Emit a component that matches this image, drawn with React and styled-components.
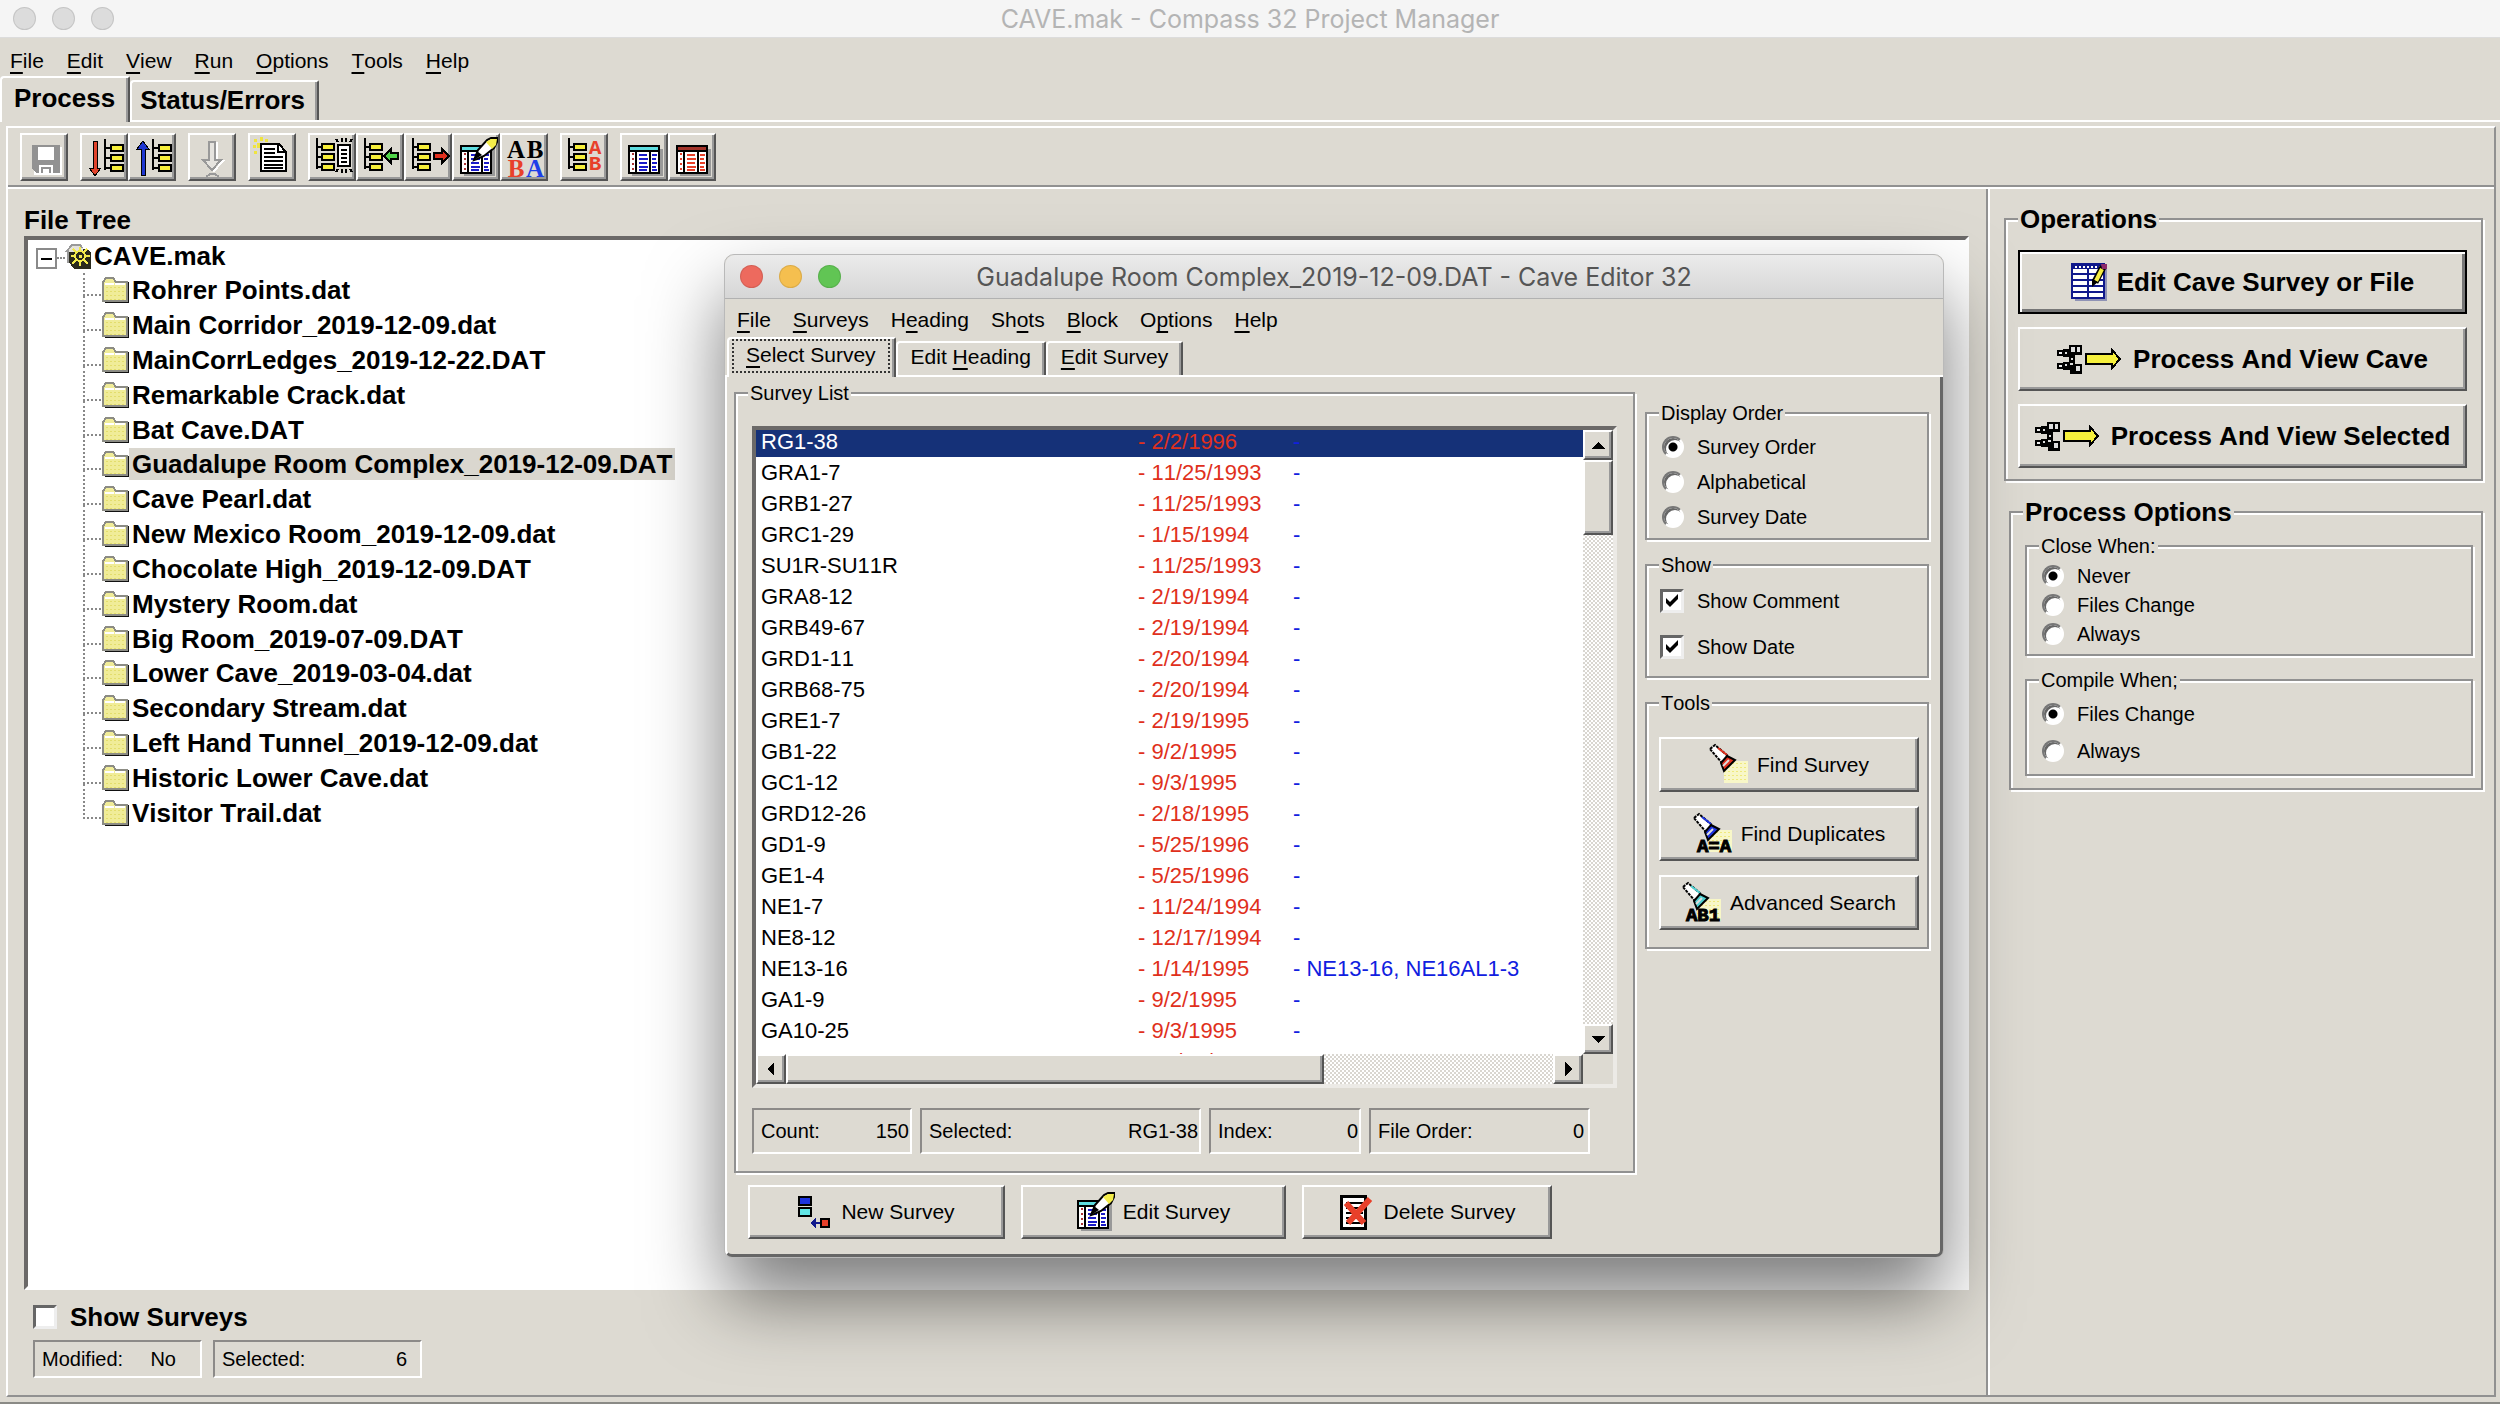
import React from "react";
import styled, { createGlobalStyle, css } from "styled-components";

const face = "#dddad2";
const shade = "#919191";
const dark = "#555";
const sans = '"Liberation Sans", Arial, sans-serif';

const GlobalStyle = createGlobalStyle`
  *, *::before, *::after { box-sizing: border-box; }
  body { margin: 0; background: ${face}; font-family: ${sans}; font-size: 20px; line-height: 24px; font-kerning: none; color: #000; }
  button, input { font: inherit; font-kerning: inherit; color: inherit; margin: 0; }
  ul { list-style: none; margin: 0; padding: 0; }
`;

const raised = css`
  border: 2px solid;
  border-color: #fff ${dark} ${dark} #fff;
  box-shadow: inset -2px -2px 0 #999;
  background: ${face};
`;

const sunken = css`
  border: 2px solid;
  border-color: #8c8a88 #fff #fff #8c8a88;
`;

/* ---------- application shell ---------- */

const Screen = styled.div`
  position: relative;
  min-height: 100vh;
  display: flex;
  flex-direction: column;
  border-bottom: 2px solid #8a8a86;
`;

const TitleBar = styled.header`
  display: flex;
  align-items: center;
  position: relative;
  height: ${(p) => (p.$active ? 44 : 38)}px;
  padding-left: ${(p) => (p.$active ? 15 : 13)}px;
  background: ${(p) => (p.$active ? "linear-gradient(#ebebeb, #d6d6d6)" : "#f5f5f5")};
  border-bottom: 1px solid ${(p) => (p.$active ? "#b1b1b1" : "#dcdcdc")};
  border-radius: ${(p) => (p.$active ? "10px 10px 0 0" : "0")};
`;

const Title = styled.h1`
  position: absolute;
  inset: 0;
  display: flex;
  align-items: center;
  justify-content: center;
  margin: 0;
  font: 400 25px/30px Inter, ${sans};
  color: ${(p) => (p.$active ? "#555" : "#b4b4b4")};
  pointer-events: none;
`;

const Lights = styled.div`
  display: flex;
  gap: 16px;
`;

const Light = styled.button`
  width: 23px;
  height: 23px;
  padding: 0;
  border: 1px solid rgba(0, 0, 0, 0.1);
  border-radius: 50%;
  background: ${(p) => p.$color};
`;

const MenuBar = styled.nav`
  display: flex;
  align-items: center;
  gap: ${(p) => (p.$small ? 22 : 23)}px;
  height: 38px;
  padding: ${(p) => (p.$small ? "4px 12px 0 12px" : "8px 10px 0")};
  font-size: 21px;
`;

const MenuItem = styled.button`
  padding: 0;
  border: 0;
  background: none;
  line-height: 28px;
`;

const Key = styled.span`
  text-decoration: underline;
  text-decoration-thickness: 2px;
  text-underline-offset: 4px;
`;

const TabBar = styled.div`
  display: flex;
  align-items: flex-end;
  height: ${(p) => p.$height}px;
  border-bottom: 2px solid #fff;
  padding-left: ${(p) => p.$start}px;
`;

const Tab = styled.button`
  display: flex;
  align-items: center;
  justify-content: center;
  align-self: ${(p) => (p.$active ? "stretch" : "flex-end")};
  height: ${(p) => (p.$active ? "auto" : p.$big ? "40px" : "34px")};
  margin-bottom: ${(p) => (p.$active ? -2 : 0)}px;
  padding: ${(p) => (p.$big ? (p.$active ? "0 13px 5px 12px" : "0 12px 3px 8px") : p.$active ? "0 4px 2px 3px" : "0 13px 5px")};
  font-size: ${(p) => (p.$big ? 26 : 21)}px;
  font-weight: ${(p) => (p.$big ? 700 : 400)};
  line-height: 28px;
  background: ${face};
  border: solid;
  border-width: 2px 2px 0 2px;
  border-color: #fff ${dark} #fff #fff;
  border-radius: 4px 2px 0 0;
  box-shadow: inset -2px 0 0 #999;
`;

const FocusBox = styled.span`
  padding: 0 12px 2px;
  margin-bottom: 2px;
  border: 2px dotted #333;
`;

const Body = styled.main`
  flex: 1;
  display: flex;
  flex-direction: column;
  margin: 4px 4px 5px 6px;
  border: 2px solid;
  border-color: #fff ${shade} ${shade} #fff;
`;

const Toolbar = styled.div`
  display: flex;
  gap: 12px;
  padding: 5px 12px 4px;
  border-bottom: 2px solid ${shade};
  box-shadow: 0 2px 0 #fff;
`;

const ToolGroup = styled.div`
  display: flex;
`;

const ToolButton = styled.button`
  ${raised}
  width: 48px;
  height: 48px;
  padding: 0;
  svg { display: block; margin: -2px; }
`;

const Panes = styled.div`
  flex: 1;
  display: flex;
  padding-top: 2px;
`;

const TreePane = styled.section`
  flex: 1;
  min-width: 0;
  display: flex;
  flex-direction: column;
  padding: 16px 17px 17px 16px;
`;

const PaneTitle = styled.h2`
  margin: 0 0 1px;
  font-size: 26px;
  line-height: 30px;
`;

const Tree = styled.div`
  flex: 1;
  margin-bottom: 4px;
  background: #fff;
  border: 4px solid;
  border-color: #6b6968 #fff #fff #6b6968;
  font-size: 26px;
  font-weight: 700;
  line-height: 30px;
  white-space: nowrap;
`;

const TreeRoot = styled.div`
  display: flex;
  align-items: center;
  height: 33px;
  padding: 0 0 2px 8px;
`;

const Collapse = styled.button`
  position: relative;
  width: 21px;
  height: 21px;
  margin: 6px 8px 0 0;
  padding: 0;
  background: #fff;
  border: 2px solid #8a8a8a;
  &::before {
    content: "";
    display: block;
    height: 2px;
    margin: 0 3px;
    background: #000;
  }
  &::after {
    content: "";
    position: absolute;
    left: 19px;
    top: 7px;
    width: 8px;
    border-top: 2px dotted #888;
  }
`;

const TreeName = styled.span`
  padding: 1px 3px;
  background: ${(p) => (p.$selected ? "#dad7cf" : "none")};
`;

const TreeList = styled.ul`
  display: grid;
  grid-auto-rows: 1fr;
  height: 557px;
  margin-left: 55px;
`;

const TreeItem = styled.li`
  position: relative;
  display: flex;
  align-items: center;
  padding-left: 19px;
  &::before {
    content: "";
    position: absolute;
    left: 0;
    top: calc(-50% + 6px);
    width: 18px;
    height: 100%;
    border: dotted #888;
    border-width: 0 0 2px 2px;
  }
  &:first-child::before {
    top: 0;
    height: calc(50% + 6px);
  }
`;

const CheckLabel = styled.label`
  display: flex;
  align-items: center;
  gap: 13px;
  height: ${(p) => p.$row}px;
  padding-left: ${(p) => p.$indent || 0}px;
  ${(p) => p.$bold && "font-size: 26px; font-weight: 700; line-height: 30px;"}
`;

const CheckBox = styled.input`
  appearance: none;
  width: 24px;
  height: 24px;
  background: #fff;
  border: 3px solid;
  border-color: #666 #eee #eee #666;
  &:checked {
    background: #fff url("data:image/svg+xml,%3Csvg xmlns='http://www.w3.org/2000/svg' viewBox='0 0 18 18'%3E%3Cpath d='M3 6v5l4 4 8-8V2L7 10z'/%3E%3C/svg%3E") center / 18px no-repeat;
  }
`;

const RadioDot = styled.input`
  appearance: none;
  width: 22px;
  height: 22px;
  border: 2px solid;
  border-color: #777 #fff #fff #777;
  border-radius: 50%;
  background: #fff;
  box-shadow: inset 2px 2px 0 #666;
  &:checked { background: radial-gradient(circle, #000 4px, #fff 5px); }
`;

const StatusRow = styled.div`
  display: flex;
  gap: ${(p) => p.$gap}px;
  margin-left: ${(p) => p.$indent || 0}px;
`;

const StatusField = styled.div`
  ${sunken}
  display: flex;
  align-items: center;
  justify-content: space-between;
  width: ${(p) => p.$width}px;
  height: ${(p) => (p.$tall ? 46 : 38)}px;
  padding: 0 ${(p) => p.$end || 1}px 0 7px;
`;

/* ---------- groups and buttons ---------- */

const Group = styled.fieldset`
  min-width: 0;
  margin: 0;
  padding: ${(p) => p.$pad};
  border: 2px solid ${shade};
  box-shadow: inset 2px 2px 0 #fff, 2px 2px 0 #fff;
`;

const Legend = styled.legend`
  padding: 0 2px;
  background: ${face};
  ${(p) => p.$bold && "font-size: 26px; font-weight: 700;"}
  line-height: ${(p) => (p.$bold ? 30 : 24)}px;
`;

const Stack = styled.div`
  display: flex;
  flex-direction: column;
  gap: ${(p) => p.$gap}px;
  padding: ${(p) => p.$pad || 0};
`;

const SidePane = styled.aside`
  width: 508px;
  padding: 15px 11px 0 16px;
  border-left: 2px solid ${shade};
  box-shadow: inset 2px 0 0 #fff;
`;

const PushButton = styled.button`
  ${raised}
  display: flex;
  align-items: center;
  justify-content: center;
  gap: ${(p) => p.$gap || 8}px;
  width: ${(p) => p.$width || "100%"};
  height: ${(p) => p.$height}px;
  padding: 0;
  white-space: nowrap;
  font-size: ${(p) => (p.$bold ? 26 : 21)}px;
  font-weight: ${(p) => (p.$bold ? 700 : 400)};
  ${(p) => p.$default && "border-color: #000; box-shadow: inset 2px 2px 0 #fff, inset -3px -3px 0 #777;"}
  svg { flex: none; }
`;

/* ---------- editor window ---------- */

const EditorWindow = styled.section`
  position: absolute;
  left: 28.96%;
  top: 254px;
  width: 48.8%;
  background: ${face};
  border: 1px solid #b9b9b9;
  border-radius: 10px 10px 8px 8px;
  box-shadow: 0 40px 76px 0 rgba(0, 0, 0, 0.52);
`;

const EditorPage = styled.div`
  display: flex;
  gap: 10px;
  padding: 4px 11px 15px 7px;
  border: solid;
  border-width: 0 3px 3px 2px;
  border-color: #fff #666 #666 #fff;
  border-radius: 0 0 7px 7px;
`;

const ListColumn = styled.div`
  flex: 1;
  min-width: 0;
`;

const OptionColumn = styled.div`
  width: 284px;
  display: flex;
  flex-direction: column;
  gap: 13px;
  padding-top: 20px;
`;

const ListBox = styled.div`
  display: grid;
  grid-template: 1fr 30px / 1fr 30px;
  height: 662px;
  background: #fff;
  border: 4px solid;
  border-color: #6b6968 #eceae6 #eceae6 #6b6968;
`;

const Rows = styled.div`
  min-height: 0;
  overflow: hidden;
`;

const SurveyTable = styled.table`
  width: 100%;
  margin-top: -4px;
  table-layout: fixed;
  border-collapse: collapse;
  font-size: 22px;
  line-height: 31px;
`;

const SurveyRow = styled.tr`
  color: ${(p) => (p.$selected ? "#fff" : "#000")};
  background: ${(p) => (p.$selected ? "#153178" : "none")};
`;

const Cell = styled.td`
  width: ${(p) => p.$width || "auto"};
  height: 31px;
  padding: 0 0 0 ${(p) => (p.$first ? 5 : 0)}px;
  color: ${(p) => p.$color || "inherit"};
  white-space: nowrap;
`;

const Scroll = styled.div`
  display: flex;
  flex-direction: ${(p) => (p.$vertical ? "column" : "row")};
  background: repeating-conic-gradient(#fff 0 25%, #d9d6d0 0 50%) 0 0 / 4px 4px;
`;

const Arrow = styled.button`
  ${raised}
  flex: none;
  width: 30px;
  height: 30px;
  padding: 0;
  display: grid;
  place-items: center;
`;

const Thumb = styled.div`
  ${raised}
  ${(p) => (p.$vertical ? "height: 75px; margin-bottom: auto;" : "width: 65%; margin-right: auto;")}
`;

const Corner = styled.div`
  background: ${face};
`;

const ButtonRow = styled.div`
  display: flex;
  gap: 16px;
  padding: 12px 0 0 14px;
`;

/* ---------- drawings ---------- */

const Drawing = styled.svg`
  overflow: visible;
`;

const Glyph = ({ w = 48, h = 48, children }) => (
  <Drawing width={w} height={h} viewBox={`0 0 ${w} ${h}`} aria-hidden="true" shapeRendering="crispEdges">
    {children}
  </Drawing>
);

const Branches = ({ x, box }) => (
  <g fill="none" stroke="#000" strokeWidth="2">
    <path d={`M${x} 5v31M${x} 14h${box - x}M${x} 24h${box - x}M${x} 34h${box - x}`} />
    {[11, 21, 31].map((y) => (
      <rect key={y} x={box + 1} y={y} width="12" height="6" fill="#f6ee3a" />
    ))}
  </g>
);

const SheetArt = ({ x = 0, y = 0, head = "#5fdde0", ink = "#1a1ac8", side = "#a33" }) => (
  <g transform={`translate(${x} ${y})`}>
    <path d="M4 4h31v27H4z" fill="#999" />
    <path d="M1 1h30v27H1z" fill="#fff" stroke="#000" strokeWidth="2" />
    <path d="M2 2h28v3H2z" fill={head} />
    <path d="M1 6h30M8 6v22M22 6v22" stroke="#000" strokeWidth="2" />
    <path d="M5 8v18" stroke={side} strokeWidth="2" strokeDasharray="2 3" />
    <path d="M11 10h8M11 14h9M11 18h8M11 22h9M11 25h8M24 10h5M24 14h4M24 18h5M24 22h4M24 25h5" stroke={ink} strokeWidth="2" />
  </g>
);

const PenArt = ({ x = 0, y = 0 }) => (
  <g transform={`translate(${x} ${y})`} shapeRendering="auto">
    <path d="M0 22l4-10 9-10 4-2h6v4l-3 6-10 8-7 3z" fill="#fff" stroke="#000" strokeWidth="2" />
    <path d="M12 4l5-3h6l-1 6-4 4z" fill="#f3ec4a" />
    <path d="M0 22l3-9 5 4z" fill="#000" />
  </g>
);

const icons = {
  save: (
    <Glyph>
      <path d="M14 14h28v28H14z" fill="#fff" />
      <path d="M12 12h28v28H16l-4-4z" fill="#929292" />
      <path d="M18 14h16v13H18zM19 32h14v8H19z" fill="#fff" />
      <path d="M21 34h10v2H21zM21 34h2v6h-2zM29 34h2v6h-2z" fill="#929292" />
    </Glyph>
  ),
  openDown: (
    <Glyph>
      <path d="M13 8h4v27h4l-6 8-6-8h4z" fill="#e0432b" stroke="#000" strokeWidth="1" />
      <g transform="translate(0 1)"><Branches x={25} box={30} /></g>
    </Glyph>
  ),
  openUp: (
    <Glyph>
      <path d="M13 42h4V16h4l-6-8-6 8h4z" fill="#1e36d0" stroke="#000" strokeWidth="1" />
      <g transform="translate(0 1)"><Branches x={25} box={30} /></g>
    </Glyph>
  ),
  down: (
    <Glyph>
      <path d="M23 10h6v18h6l-9 10-9-10h6z" fill="none" stroke="#fff" strokeWidth="2" />
      <path d="M21 9h6v18h6l-9 10-9-10h6z" fill="#e6e4df" stroke="#999" strokeWidth="2" />
      <path d="M18 44l4-3h5l4 3" fill="none" stroke="#999" strokeWidth="2" />
    </Glyph>
  ),
  newDoc: (
    <Glyph>
      <g fill="#efe440">
        <path d="M6 6h3v3H6zM12 4h3v4h-3zM17 6h3v3h-3zM9 10h7v5H9zM5 12h3v3H5zM6 18h3v3H6z" />
      </g>
      <path d="M13 11h18l7 8v19H13z" fill="#fff" stroke="#000" strokeWidth="2" />
      <path d="M30 11v8h8M16 16h11M16 20h11M16 24h19M16 28h19M16 32h19M16 35h19" fill="none" stroke="#000" strokeWidth="2" />
    </Glyph>
  ),
  insert: (
    <Glyph>
      <Branches x={9} box={13} />
      <path d="M30 12h12v21H30z" fill="#fff" stroke="#000" strokeWidth="2" />
      <path d="M33 17h6M33 21h6M33 25h6M33 29h6M28 6l2 3M34 5v4M38 5v4M44 6l-2 3M28 39l2-3M34 40v-4M38 40v-4M44 39l-2-3" stroke="#000" strokeWidth="2" />
    </Glyph>
  ),
  addNode: (
    <Glyph>
      <Branches x={9} box={13} />
      <path d="M28 23l7-7v4h7v6h-7v4z" fill="#4fd348" stroke="#000" strokeWidth="2" />
    </Glyph>
  ),
  removeNode: (
    <Glyph>
      <Branches x={9} box={13} />
      <path d="M45 23l-7-7v4h-8v6h8v4z" fill="#e0301e" stroke="#000" strokeWidth="2" />
    </Glyph>
  ),
  editSheet: (
    <Glyph>
      <SheetArt x={8} y={12} />
      <PenArt x={22} y={5} />
    </Glyph>
  ),
  letters: (
    <Glyph>
      <g fontFamily="Liberation Serif" fontWeight="700" fontSize="25" textAnchor="middle">
        <text x="16" y="25">A</text>
        <text x="35" y="25">B</text>
        <text x="16" y="44" fill="#e8402a">B</text>
        <text x="35" y="44" fill="#1d3fe8">A</text>
      </g>
    </Glyph>
  ),
  sort: (
    <Glyph>
      <Branches x={9} box={13} />
      <g fontFamily="Liberation Mono" fontWeight="700" fontSize="21" textAnchor="middle" fill="#e8402a">
        <text x="35" y="21">A</text>
        <text x="35" y="37">B</text>
      </g>
    </Glyph>
  ),
  sheet: (
    <Glyph>
      <SheetArt x={8} y={12} />
    </Glyph>
  ),
  redSheet: (
    <Glyph>
      <SheetArt x={8} y={12} head="#a3342a" ink="#e8402a" side="#e8402a" />
    </Glyph>
  ),
};

const FolderIcon = () => (
  <Glyph w={27} h={26}>
    <path d="M3 5h24v21H3z" fill="#111" />
    <path d="M1 24V5l3-4h7l3 4h11v19z" fill="#f0ec98" stroke="#8c8c84" strokeWidth="2" />
    <path d="M3 7h9M13 7h10" stroke="#fff" strokeWidth="2" />
    <path d="M4 10h19M4 14h19M4 18h19M4 22h19" stroke="#e3dd6c" strokeWidth="1" strokeDasharray="2 2" />
  </Glyph>
);

const ProjectIcon = () => (
  <Glyph w={26} h={26}>
    <path d="M4 6h18l4 4v16H9l-5-7z" fill="#2a2a1c" />
    <path d="M2 9l5-7h8l3 4v3H2z" fill="#e4e2dc" />
    <path d="M1 9l6-7h8l2 3M3 20V8" fill="none" stroke="#999" strokeWidth="2" />
    <g stroke="#f2ea4c" strokeWidth="2" fill="none">
      <circle cx="15" cy="13" r="5" />
      <path d="M15 4v4M15 18v5M6 13h4M20 13h5M8 6l4 4M18 16l5 5M22 6l-4 4M12 16l-5 5" />
    </g>
    <path d="M14 12h3v3h-3z" fill="#f2ea4c" />
  </Glyph>
);

const GridIcon = () => (
  <Glyph w={36} h={38}>
    <path d="M4 4h32v34H4z" fill="#8f93b5" />
    <path d="M1 1h32v34H1z" fill="#fff" stroke="#10198c" strokeWidth="2" />
    <path d="M1 1h32v5H1z" fill="#10198c" />
    <path d="M4 4h27" stroke="#fff" strokeWidth="2" strokeDasharray="2 2" />
    <path d="M1 11h32M1 17h32M1 23h32M1 29h32M17 6v29" stroke="#10198c" strokeWidth="2" />
    <g shapeRendering="auto">
      <path d="M32 4l-8 15" stroke="#000" strokeWidth="7" />
      <path d="M31 6l-6 12" stroke="#f4ec42" strokeWidth="4" />
      <path d="M21 16l6 3-6 5z" fill="#000" />
      <path d="M30 1h6v5h-5z" fill="#8c2a6a" />
    </g>
  </Glyph>
);

const ProcessIcon = () => (
  <Glyph w={64} h={30}>
    <path d="M12 1h13v10H12zM6 5h10v8H6zM12 11h6v8h-6zM6 18h12v8H6zM13 20h12v10H13z" fill="#000" />
    <path d="M1 7h5v4H1zM1 20h5v4H1z" fill="#eee" stroke="#000" strokeWidth="2" />
    <path d="M14 3h4v5h-4zM20 3h3v5h-3zM19 22h4v5h-4zM8 8h2v2H8zM8 20h2v2H8zM14 14h2v2h-2zM13 19h3v2h-3z" fill="#ddd" />
    <path d="M29 10h26V6l8 9-8 9v-4H29z" fill="#f6f03c" stroke="#000" strokeWidth="2" />
  </Glyph>
);

const TorchIcon = ({ color, label }) => (
  <Glyph w={40} h={40}>
    <path d="M15 16h24v22H15z" fill="#f8f7c8" />
    <path d="M15 18h24M15 22h24M15 26h24M15 30h24M15 34h24" stroke="#efe97c" strokeWidth="1" strokeDasharray="2 2" />
    <g shapeRendering="auto">
      <path d="M1 4l5-4 13 11-6 7z" fill="#fff" stroke="#000" strokeWidth="2" strokeDasharray="3 1" />
      <path d="M9 3l9 7" stroke={color} strokeWidth="2" />
      <path d="M18 11l8 4-11 11-3-8z" fill={color} stroke="#000" strokeWidth="2" />
      <path d="M14 21l6-6" stroke="#ddd" strokeWidth="2" />
    </g>
    {label && (
      <text x="21" y="38" textAnchor="middle" fontFamily="Liberation Mono" fontWeight="700" fontSize="19" stroke="#000" strokeWidth="1">
        {label}
      </text>
    )}
  </Glyph>
);

const AddIcon = () => (
  <Glyph w={32} h={32}>
    <path d="M1 1h12v8H1zM1 12h12v8H1z" stroke="#000" strokeWidth="2" fill="#1d34e0" />
    <path d="M2 13h10v6H2z" fill="#62e6e6" />
    <path d="M23 23h8v8h-8z" stroke="#000" strokeWidth="2" fill="#e8402a" />
    <path d="M12 27l6-5v4h4v2h-4v4z" fill="#10198c" />
  </Glyph>
);

const EditIcon = () => (
  <Glyph w={38} h={38}>
    <SheetArt y={7} />
    <PenArt x={14} />
  </Glyph>
);

const DeleteIcon = () => (
  <Glyph w={34} h={36}>
    <path d="M2 2h24v32H2z" fill="#fff" stroke="#000" strokeWidth="3" />
    <path d="M3 1v34M7 9h17M7 14h17M7 19h17M7 24h17M7 29h17" stroke="#000" strokeWidth="2" />
    <path d="M7 9l18 20M31 5L9 29" stroke="#e8402a" strokeWidth="6" shapeRendering="auto" />
  </Glyph>
);

const arrows = { up: "M7 4l7 7H0z", down: "M0 4h14l-7 7z", left: "M3 7l7-7v14z", right: "M4 0l7 7-7 7z" };

const ScrollArrow = ({ dir }) => (
  <Arrow aria-label={`Scroll ${dir}`}>
    <Glyph w={14} h={14}><path d={arrows[dir]} /></Glyph>
  </Arrow>
);

/* ---------- data ---------- */

const toolGroups = [["save"], ["openDown", "openUp"], ["down"], ["newDoc"], ["insert", "addNode", "removeNode", "editSheet", "letters"], ["sort"], ["sheet", "redSheet"]];

const files = [
  "Rohrer Points.dat", "Main Corridor_2019-12-09.dat", "MainCorrLedges_2019-12-22.DAT", "Remarkable Crack.dat",
  "Bat Cave.DAT", "Guadalupe Room Complex_2019-12-09.DAT", "Cave Pearl.dat", "New Mexico Room_2019-12-09.dat",
  "Chocolate High_2019-12-09.DAT", "Mystery Room.dat", "Big Room_2019-07-09.DAT", "Lower Cave_2019-03-04.dat",
  "Secondary Stream.dat", "Left Hand Tunnel_2019-12-09.dat", "Historic Lower Cave.dat", "Visitor Trail.dat",
];

const surveys = [
  ["RG1-38", "2/2/1996"], ["GRA1-7", "11/25/1993"], ["GRB1-27", "11/25/1993"], ["GRC1-29", "1/15/1994"],
  ["SU1R-SU11R", "11/25/1993"], ["GRA8-12", "2/19/1994"], ["GRB49-67", "2/19/1994"], ["GRD1-11", "2/20/1994"],
  ["GRB68-75", "2/20/1994"], ["GRE1-7", "2/19/1995"], ["GB1-22", "9/2/1995"], ["GC1-12", "9/3/1995"],
  ["GRD12-26", "2/18/1995"], ["GD1-9", "5/25/1996"], ["GE1-4", "5/25/1996"], ["NE1-7", "11/24/1994"],
  ["NE8-12", "12/17/1994"], ["NE13-16", "1/14/1995", "NE13-16, NE16AL1-3"], ["GA1-9", "9/2/1995"],
  ["GA10-25", "9/3/1995"], ["RA30", "12/18/1997"],
];

/* An ampersand marks the access key, e.g. "&File". */
const KeyText = ({ text }) => {
  const i = text.indexOf("&");
  if (i < 0) return text;
  return (
    <span>
      {text.slice(0, i)}
      <Key>{text[i + 1]}</Key>
      {text.slice(i + 2)}
    </span>
  );
};

const Menu = ({ items, small }) => (
  <MenuBar $small={small}>
    {items.map((t) => (
      <MenuItem key={t}><KeyText text={t} /></MenuItem>
    ))}
  </MenuBar>
);

const WindowLights = ({ colors }) => (
  <Lights>
    {["Close", "Minimize", "Zoom"].map((n, i) => (
      <Light key={n} aria-label={n} $color={colors[i]} />
    ))}
  </Lights>
);

const Radios = ({ name, options, row }) =>
  options.map((o, i) => (
    <CheckLabel key={o} $row={row} $indent={3}>
      <RadioDot type="radio" name={name} defaultChecked={i === 0} />
      {o}
    </CheckLabel>
  ));

const Status = ({ label, value, ...rest }) => (
  <StatusField {...rest}>
    <span>{label}</span>
    <span>{value}</span>
  </StatusField>
);

const Editor = () => (
  <EditorWindow>
    <TitleBar $active>
      <WindowLights colors={["#ed6a5e", "#f5bf4f", "#61c554"]} />
      <Title as="h2" $active>Guadalupe Room Complex_2019-12-09.DAT - Cave Editor 32</Title>
    </TitleBar>
    <Menu small items={["&File", "&Surveys", "H&eading", "Sh&ots", "&Block", "O&ptions", "&Help"]} />
    <TabBar role="tablist" $height={40} $start={2}>
      <Tab role="tab" $active><FocusBox><KeyText text="&Select Survey" /></FocusBox></Tab>
      <Tab role="tab"><KeyText text="Edit &Heading" /></Tab>
      <Tab role="tab"><KeyText text="&Edit Survey" /></Tab>
    </TabBar>
    <EditorPage>
      <ListColumn>
        <Group $pad="21px 12px 17px">
          <Legend>Survey List</Legend>
          <Stack $gap={20} $pad="0 4px">
            <ListBox>
              <Rows>
                <SurveyTable>
                  <tbody>
                    {surveys.map(([name, date, note], i) => (
                      <SurveyRow key={name} $selected={i === 0}>
                        <Cell $first $width="382px">{name}</Cell>
                        <Cell $width="155px" $color="#e0301c">- {date}</Cell>
                        <Cell $color="#1020e0">- {note}</Cell>
                      </SurveyRow>
                    ))}
                  </tbody>
                </SurveyTable>
              </Rows>
              <Scroll $vertical>
                <ScrollArrow dir="up" />
                <Thumb $vertical />
                <ScrollArrow dir="down" />
              </Scroll>
              <Scroll>
                <ScrollArrow dir="left" />
                <Thumb />
                <ScrollArrow dir="right" />
              </Scroll>
              <Corner />
            </ListBox>
            <StatusRow $gap={8}>
              <Status $tall $width={160} label="Count:" value="150" />
              <Status $tall $width={281} label="Selected:" value="RG1-38" />
              <Status $tall $width={152} label="Index:" value="0" />
              <Status $tall $width={221} $end={4} label="File Order:" value="0" />
            </StatusRow>
          </Stack>
        </Group>
        <ButtonRow>
          <PushButton $width="257px" $height={54} $gap={11}><AddIcon />New Survey</PushButton>
          <PushButton $width="265px" $height={54}><EditIcon />Edit Survey</PushButton>
          <PushButton $width="250px" $height={54} $gap={11}><DeleteIcon />Delete Survey</PushButton>
        </ButtonRow>
      </ListColumn>
      <OptionColumn>
        <Group $pad="4px 12px 4px">
          <Legend>Display Order</Legend>
          <Radios name="order" row={35} options={["Survey Order", "Alphabetical", "Survey Date"]} />
        </Group>
        <Group $pad="1px 12px 6px">
          <Legend>Show</Legend>
          {["Show Comment", "Show Date"].map((t) => (
            <CheckLabel key={t} $row={46} $indent={1}>
              <CheckBox type="checkbox" defaultChecked />
              {t}
            </CheckLabel>
          ))}
        </Group>
        <Group $pad="22px 8px 17px 12px">
          <Legend>Tools</Legend>
          <Stack $gap={14}>
            <PushButton $height={55}><TorchIcon color="#e0301e" />Find Survey</PushButton>
            <PushButton $height={55}><TorchIcon color="#1d34e0" label="A=A" />Find Duplicates</PushButton>
            <PushButton $height={55}><TorchIcon color="#4fd0d0" label="AB1" />Advanced Search</PushButton>
          </Stack>
        </Group>
      </OptionColumn>
    </EditorPage>
  </EditorWindow>
);

export default function App() {
  return (
    <Screen>
      <GlobalStyle />
      <TitleBar>
        <WindowLights colors={["#dcdcdc", "#dcdcdc", "#dcdcdc"]} />
        <Title>CAVE.mak - Compass 32 Project Manager</Title>
      </TitleBar>
      <Menu items={["&File", "&Edit", "&View", "&Run", "&Options", "&Tools", "&Help"]} />
      <TabBar role="tablist" $height={46} $start={0}>
        <Tab role="tab" $big $active>Process</Tab>
        <Tab role="tab" $big>Status/Errors</Tab>
      </TabBar>
      <Body>
        <Toolbar>
          {toolGroups.map((group) => (
            <ToolGroup key={group[0]}>
              {group.map((name) => (
                <ToolButton key={name} aria-label={name}>{icons[name]}</ToolButton>
              ))}
            </ToolGroup>
          ))}
        </Toolbar>
        <Panes>
          <TreePane>
            <PaneTitle>File Tree</PaneTitle>
            <Tree>
              <TreeRoot>
                <Collapse aria-label="Collapse" />
                <ProjectIcon />
                <TreeName>CAVE.mak</TreeName>
              </TreeRoot>
              <TreeList>
                {files.map((f, i) => (
                  <TreeItem key={f}>
                    <FolderIcon />
                    <TreeName $selected={i === 5}>{f}</TreeName>
                  </TreeItem>
                ))}
              </TreeList>
            </Tree>
            <CheckLabel $row={46} $indent={9} $bold>
              <CheckBox type="checkbox" />
              Show Surveys
            </CheckLabel>
            <StatusRow $gap={11} $indent={9}>
              <Status $width={169} $end={24} label="Modified:" value="No" />
              <Status $width={209} $end={13} label="Selected:" value="6" />
            </StatusRow>
          </TreePane>
          <SidePane>
            <Group $pad="16px 14px 11px 12px">
              <Legend $bold>Operations</Legend>
              <Stack $gap={13}>
                <PushButton $bold $default $height={64} $gap={10}><GridIcon />Edit Cave Survey or File</PushButton>
                <PushButton $bold $height={64} $gap={12}><ProcessIcon />Process And View Cave</PushButton>
                <PushButton $bold $height={64} $gap={12}><ProcessIcon />Process And View Selected</PushButton>
              </Stack>
            </Group>
            <Stack $pad="16px 0 0 5px">
              <Group $pad="7px 8px 12px 12px">
                <Legend $bold>Process Options</Legend>
                <Stack $gap={12} $pad="0 0 0 2px">
                  <Group $pad="3px 12px 6px">
                    <Legend>Close When:</Legend>
                    <Radios name="close" row={29} options={["Never", "Files Change", "Always"]} />
                  </Group>
                  <Group $pad="3px 12px 5px">
                    <Legend>Compile When;</Legend>
                    <Radios name="compile" row={37} options={["Files Change", "Always"]} />
                  </Group>
                </Stack>
              </Group>
            </Stack>
          </SidePane>
        </Panes>
      </Body>
      <Editor />
    </Screen>
  );
}
